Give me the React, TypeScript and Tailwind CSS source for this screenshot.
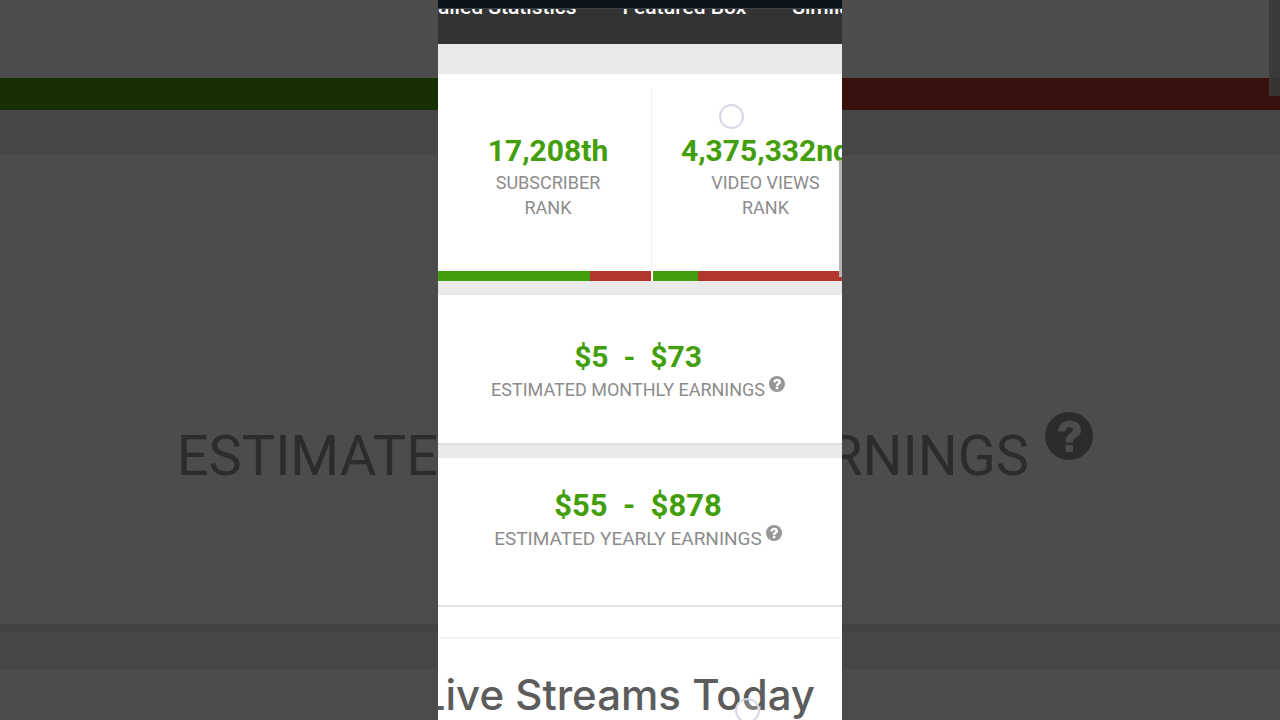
import type { ReactNode } from "react";

function HelpIcon({ className }: { className: string }) {
  return (
    <svg viewBox="0 0 48 48" className={className} role="img" aria-label="Help">
      <circle cx="24" cy="24" r="24" className="fill-current" />
      <path
        d="M13 19.500C13.500 12.500 18 8.500 24.500 8.500c6.500 0 11.500 3.700 11.500 9.500 0 4-2.300 6-5 7.800-2.200 1.500-3 2.400-3 4.700h-7.500c0-5 1.500-7 4.500-9 2-1.300 3-2 3-3.500 0-1.700-1.400-2.700-3.400-2.700-2.400 0-3.800 1.600-4.300 4.200zM20.500 33h7.500v7h-7.500z"
        fill="var(--mark)"
      />
    </svg>
  );
}

function TouchDot({ className }: { className: string }) {
  return (
    <span
      aria-hidden="true"
      className={`absolute size-[25px] rounded-full border-2 border-[#d9d7e6] bg-white/20 ${className}`}
    />
  );
}

function Rank({ value, label, good, inset }: { value: string; label: string; good: string; inset: string }) {
  return (
    <div className="flex flex-col">
      <div className={`flex h-[197px] flex-col items-center pt-[58px] text-center ${inset}`}>
        <p className="text-[30px] leading-[38px] font-bold text-[#429e0a]">{value}</p>
        <p className="w-[130px] text-[18px] leading-[25px] text-[#8c8c8c]">{label}</p>
      </div>
      <div className="flex h-[10px] bg-[#b1362c]">
        <div className={`bg-[#429e0a] ${good}`} />
      </div>
    </div>
  );
}

function Earnings({
  value,
  label,
  padding,
  valueSize,
  labelSize,
}: {
  value: string;
  label: string;
  padding: string;
  valueSize: string;
  labelSize: string;
}) {
  return (
    <section className={`flex shrink-0 flex-col items-center bg-white pr-1 ${padding}`}>
      <p className={`leading-[38px] font-bold whitespace-pre text-[#429e0a] ${valueSize}`}>{value}</p>
      <p className={`flex items-start gap-1 leading-[28px] whitespace-nowrap text-[#8c8c8c] ${labelSize}`}>
        {label}
        <HelpIcon className="size-4 text-[#969696] [--mark:#ffffff]" />
      </p>
    </section>
  );
}

function SidePanel({ bar, children }: { bar: string; children: ReactNode }) {
  return (
    <aside
      aria-hidden="true"
      className="relative flex h-screen min-w-0 flex-1 flex-col overflow-hidden bg-[#4c4c4c]"
    >
      <div className={`mt-[78px] h-8 shrink-0 ${bar}`} />
      <div className="h-[45px] shrink-0 bg-[#464646]" />
      <div className="flex h-[469px] shrink-0 flex-col pt-[137px]">{children}</div>
      <div className="h-[45px] shrink-0 border-t-8 border-[#434343] bg-[#464646]" />
    </aside>
  );
}

export default function App() {
  return (
    <div className="flex h-screen overflow-hidden font-[Roboto,sans-serif]">
      <SidePanel bar="bg-[#163003]">
        <p className="-mr-[51px] self-end text-[95px] leading-[120px] font-bold text-[#142208]">$</p>
        <p className="self-end text-[56px] leading-[88px] text-[#2c2c2c]">ESTIMATE</p>
      </SidePanel>
      <main className="relative flex h-screen w-[404px] shrink-0 flex-col overflow-hidden bg-white">
        <div className="h-[9px] shrink-0 border-b border-[#3b4247] bg-[#0c1419]" />
        <nav className="flex h-[35px] shrink-0 items-start overflow-hidden bg-[#333333]">
          <div className="-mt-[14px] -ml-8 flex gap-[46px] text-[21px] leading-6 font-medium whitespace-nowrap text-white">
            <a href="#statistics">Detailed Statistics</a>
            <a href="#featured">Featured Box</a>
            <a href="#similar">Similar Channels</a>
          </div>
        </nav>
        <div className="h-[30px] shrink-0 bg-[#eaeaec]" />
        <section className="relative grid shrink-0 grid-cols-[213px_222px] gap-x-[2px]">
          <Rank value="17,208th" label="SUBSCRIBER RANK" good="w-[152px]" inset="pl-[7px]" />
          <Rank value="4,375,332nd" label="VIDEO VIEWS RANK" good="w-[45px]" inset="pl-[3px]" />
          <div className="absolute top-[14px] bottom-0 left-[213px] w-px bg-[#eeeeee]" />
        </section>
        <div className="h-[14px] shrink-0 bg-[#eaeaea]" />
        <Earnings
          value="$5  -  $73"
          label="ESTIMATED MONTHLY EARNINGS"
          padding="h-[148px] pt-[43px]"
          valueSize="text-[30px]"
          labelSize="text-[18px]"
        />
        <div className="h-[15px] shrink-0 border-t-2 border-[#e0e0e0] bg-[#eaeaea]" />
        <Earnings
          value="$55  -  $878"
          label="ESTIMATED YEARLY EARNINGS"
          padding="h-[147px] pt-[29px]"
          valueSize="text-[31px]"
          labelSize="text-[19px]"
        />
        <div className="h-[2px] shrink-0 bg-[#e2e2e2]" />
        <section className="flex flex-col">
          <div className="mx-[2px] mt-[30px] h-[2px] bg-[#f2f2f2]" />
          <h2 className="mt-[26px] mr-[27px] self-end font-[Inter,sans-serif] text-[42px] leading-[60px] font-medium whitespace-nowrap text-[#5c5c5c]">
            Live Streams Today
          </h2>
        </section>
        <TouchDot className="top-[104px] left-[281px]" />
        <TouchDot className="top-[698px] left-[297px]" />
        <div className="absolute top-[160px] right-0 h-[117px] w-[3px] bg-[#b5b5b5]" />
      </main>
      <SidePanel bar="bg-[#38110e]">
        <p className="mt-[120px] -ml-[14px] flex items-start gap-4 text-[56px] leading-[88px] text-[#2c2c2c]">
          RNINGS
          <HelpIcon className="size-12 [--mark:#4c4c4c]" />
        </p>
        <div className="absolute top-0 right-0 h-24 w-[11px] bg-[#383838]/90" />
      </SidePanel>
    </div>
  );
}
